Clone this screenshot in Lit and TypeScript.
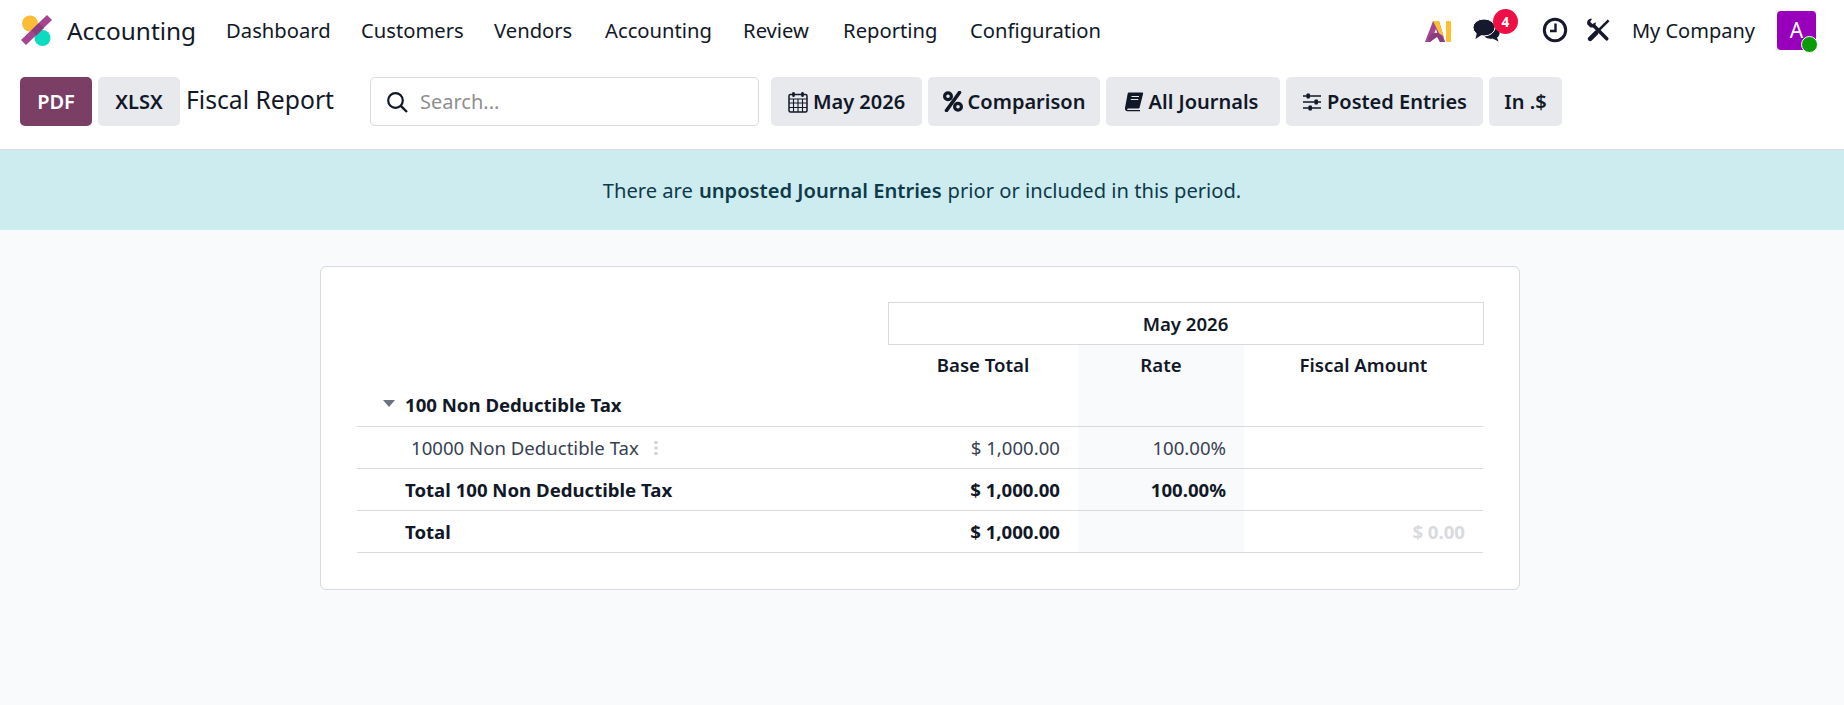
import { LitElement, html, css, svg } from "lit";
import { customElement } from "lit/decorators.js";

const menus = ["Dashboard", "Customers", "Vendors", "Accounting", "Review", "Reporting", "Configuration"];

const calendarIcon = html`<svg class="ico" viewBox="0 0 20 22" width="20" height="22">
  <rect x="1" y="3.5" width="18" height="17.5" rx="1.5" fill="none" stroke="currentColor" stroke-width="1.5" />
  <path d="M1 8h18M1 12h18M1 16.5h18M5.5 8v13M10 8v13M14.5 8v13" stroke="currentColor" stroke-width="1.1" fill="none" />
  <rect x="4.2" y="1" width="2.6" height="5" rx="1.3" fill="currentColor" />
  <rect x="13.2" y="1" width="2.6" height="5" rx="1.3" fill="currentColor" />
</svg>`;

const percentIcon = html`<svg class="ico" viewBox="0 0 20 21" width="20" height="21">
  <circle cx="5" cy="5.2" r="3.4" fill="none" stroke="currentColor" stroke-width="3.2" />
  <circle cx="15" cy="15.8" r="3.4" fill="none" stroke="currentColor" stroke-width="3.2" />
  <path d="M16.5 1.5 3.5 19.5" stroke="currentColor" stroke-width="3.6" stroke-linecap="round" />
</svg>`;

const bookIcon = html`<svg class="ico book" viewBox="0 0 20 20" width="20" height="21">
  <path d="M5 1h13.2c.7 0 1.1.6.9 1.3L15.6 16c-.2.7-.8 1-1.4 1H4.2c-1 0-1.4.8-.9 1.3.2.2.6.3 1 .3H16v1.2H3.6C1.8 19.8.6 18.4 1 16.6L3.6 2.4C3.8 1.6 4.3 1 5 1z" fill="currentColor" />
  <path d="M7.5 5h7.5M6.8 8h7.5" stroke="#e7e9ed" stroke-width="1" />
</svg>`;

const slidersIcon = html`<svg class="ico" viewBox="0 0 20 20" width="20" height="20">
  <path d="M1 4h18M1 10h18M1 16h18" stroke="currentColor" stroke-width="1.4" />
  <rect x="4.5" y="1.5" width="3.4" height="5" rx=".8" fill="currentColor" />
  <rect x="12.5" y="7.5" width="3.4" height="5" rx=".8" fill="currentColor" />
  <rect x="6.5" y="13.5" width="3.4" height="5" rx=".8" fill="currentColor" />
</svg>`;

const aiLogo = svg`
  <path d="M0 25 8 4h6l6 21h-5l-4-13-5.5 13z" fill="#a5458f" />
  <path d="M8 4h6l4.5 15-4-2-3.5-7z" fill="#fcc02e" />
  <path d="M3 21c3-5 9-7 13-3l4 7h-5l-3-5-7 5z" fill="#8a3d7a" />
  <rect x="21" y="4" width="5" height="21" rx="1" fill="#fcc02e" />
`;

@customElement("app-root")
export class AppRoot extends LitElement {
  static styles = css`
    :host {
      display: block;
      min-height: 705px;
      background: #f9fafb;
      color: #111827;
      font-family: "Noto Sans", sans-serif;
      font-size: 18.6px;
    }
    .ico {
      flex: none;
    }
    .book {
      margin-left: -4px;
    }
    .navbar {
      height: 60px;
      background: #fff;
      display: flex;
      align-items: center;
      padding: 0 28px 0 20px;
    }
    .logo {
      width: 33px;
      height: 34px;
      margin-right: 14px;
    }
    .app-name {
      font-size: 24.4px;
      margin-right: 30px;
    }
    .menus {
      display: grid;
      grid-template-columns: 135px 133px 111px 138px 100px 127px auto;
      font-size: 20.2px;
      flex: 1;
    }
    .systray {
      display: flex;
      align-items: center;
      font-size: 20px;
    }
    .chat {
      position: relative;
      display: flex;
      margin: 0 41px 0 21px;
    }
    .badge {
      position: absolute;
      top: -9px;
      left: 20px;
      width: 25px;
      height: 25px;
      border-radius: 50%;
      background: #ee0f44;
      color: #fff;
      font-size: 13.5px;
      font-weight: 700;
      display: grid;
      place-items: center;
    }
    .tools {
      margin-left: 18.5px;
    }
    .company {
      margin: 0 22px 0 21.5px;
    }
    .avatar {
      position: relative;
      width: 39px;
      height: 39px;
      border-radius: 4px;
      background: #9900bb;
      color: #fff;
      font-size: 21px;
      display: grid;
      place-items: center;
    }
    .status {
      position: absolute;
      right: -2px;
      bottom: -3px;
      width: 15px;
      height: 15px;
      border-radius: 50%;
      background: #0a9a0a;
      border: 1.5px solid #fff;
    }
    .control {
      height: 90px;
      box-sizing: border-box;
      padding: 17px 20px 0;
      background: #fff;
      display: flex;
      align-items: flex-start;
      border-bottom: 1px solid #d8dadd;
    }
    .btn {
      height: 49px;
      box-sizing: border-box;
      border-radius: 5px;
      background: #e7e9ed;
      color: #111827;
      font-weight: 600;
      font-size: 20px;
      display: flex;
      align-items: center;
      justify-content: center;
      gap: 5px;
    }
    .btn.primary {
      background: #7b3f65;
      color: #fff;
      width: 72px;
    }
    .btn.xlsx {
      width: 82px;
      margin-left: 6px;
    }
    .report-title {
      font-size: 24.7px;
      line-height: 46px;
      margin: 0 35px 0 6px;
      width: 149px;
      white-space: nowrap;
    }
    .search {
      width: 389px;
      height: 49px;
      box-sizing: border-box;
      border: 1px solid #d8dadd;
      border-radius: 5px;
      display: flex;
      align-items: center;
      gap: 12px;
      padding-left: 15px;
      color: #8f8f8f;
      font-size: 20px;
      margin-right: 12px;
    }
    .filters {
      display: flex;
      gap: 6px;
    }
    .w-date {
      width: 151px;
    }
    .w-comparison {
      width: 172px;
    }
    .w-journals {
      width: 174px;
    }
    .w-entries {
      width: 197px;
    }
    .w-unit {
      width: 73px;
    }
    .banner {
      height: 80px;
      background: #cdecf0;
      color: #0e3a4a;
      display: flex;
      align-items: center;
      justify-content: center;
      gap: 0.3em;
      font-size: 20.15px;
    }
    .banner b {
      font-weight: 600;
    }
    .page {
      padding: 36px 0 0 320px;
    }
    .card {
      width: 1200px;
      box-sizing: border-box;
      height: 324px;
      background: #fff;
      border: 1px solid #d8dadd;
      border-radius: 6px;
      padding: 35px 36px 0;
    }
    table {
      border-collapse: collapse;
      table-layout: fixed;
      width: 1126px;
    }
    .c-label {
      width: 531px;
    }
    .c-base {
      width: 190px;
    }
    .c-rate {
      width: 166px;
    }
    .c-fiscal {
      width: 239px;
    }
    td,
    th {
      padding: 0;
      font-weight: 400;
      box-sizing: border-box;
    }
    .period {
      height: 42px;
      font-weight: 600;
      text-align: center;
      border: 1px solid #d8dadd;
    }
    .heads th {
      height: 39.5px;
      font-weight: 600;
      text-align: center;
    }
    .row td {
      border-bottom: 1px solid #d8dadd;
      height: 42px;
    }
    .bold td {
      font-weight: 700;
    }
    .row .num {
      text-align: right;
      padding-right: 18px;
    }
    .shade {
      background: #f9fafb;
    }
    .label {
      padding-left: 48px;
      position: relative;
    }
    .line {
      color: #374151;
    }
    .line .label {
      padding-left: 54px;
    }
    .caret {
      position: absolute;
      left: 26px;
      top: 16px;
      width: 0;
      height: 0;
      border-left: 6px solid transparent;
      border-right: 6px solid transparent;
      border-top: 7px solid #6b7280;
    }
    .dots {
      display: inline-block;
      vertical-align: middle;
      margin-left: 10px;
      margin-top: -3px;
    }
    .zero {
      color: #d8dadd;
    }
  `;

  render() {
    return html`
      <div class="navbar">
        <svg class="logo" viewBox="0 0 33 34">
          <circle cx="10" cy="10.5" r="8" fill="#fbbd35" />
          <circle cx="22.5" cy="25" r="8" fill="#0bdcc0" />
          <path d="M27 2 32 7 6 32 1 27z" fill="#a5458f" />
          <path d="M19 10l5 5-7.5 7.5-5-5z" fill="#8a3d7a" />
        </svg>
        <span class="app-name">Accounting</span>
        <div class="menus">${menus.map((m) => html`<span>${m}</span>`)}</div>
        <div class="systray">
          <svg viewBox="0 0 27 26" width="27" height="26">${aiLogo}</svg>
          <span class="chat">
            <svg viewBox="0 0 28 24" width="28" height="24">
              <path d="M24 10c3.5 3 3.5 7.5 0 9.5l1.5 4-6-3c-3 .5-6 0-8-2z" fill="#16182d" />
              <ellipse cx="11" cy="9.5" rx="11" ry="8.5" fill="#16182d" stroke="#fff" stroke-width="1" />
              <path d="M4 14 2.5 21 10 16z" fill="#16182d" />
            </svg>
            <span class="badge">4</span>
          </span>
          <svg viewBox="0 0 26 26" width="26" height="26">
            <circle cx="13" cy="13" r="10.7" fill="none" stroke="#16182d" stroke-width="3" />
            <path d="M13.5 6.5v7.5H8" fill="none" stroke="#16182d" stroke-width="2.4" />
          </svg>
          <svg class="tools" viewBox="0 0 26 26" width="24" height="24">
            <path d="M9 9 22.5 22.5" stroke="#16182d" stroke-width="3.8" stroke-linecap="round" />
            <path d="M1.5 7C.5 3.5 2.5.5 6.5 1L4.5 4 7 6.5 10.5 4.5C11 8.5 8 11 4.5 10z" fill="#16182d" />
            <path d="M24.5 2.5 13 14" stroke="#16182d" stroke-width="2.8" />
            <path d="M11 16 4.5 22.5" stroke="#16182d" stroke-width="5" stroke-linecap="round" />
          </svg>
          <span class="company">My Company</span>
          <span class="avatar">A<span class="status"></span></span>
        </div>
      </div>

      <div class="control">
        <div class="btn primary">PDF</div>
        <div class="btn xlsx">XLSX</div>
        <div class="report-title">Fiscal Report</div>
        <div class="search">
          <svg viewBox="0 0 22 22" width="22" height="22">
            <circle cx="9.5" cy="9.5" r="7.3" fill="none" stroke="#111827" stroke-width="2.2" />
            <path d="M14.8 14.8 21 21" stroke="#111827" stroke-width="2.4" />
          </svg>
          Search...
        </div>
        <div class="filters">
          <div class="btn w-date">${calendarIcon}May 2026</div>
          <div class="btn w-comparison">${percentIcon}Comparison</div>
          <div class="btn w-journals">${bookIcon}All Journals</div>
          <div class="btn w-entries">${slidersIcon}Posted Entries</div>
          <div class="btn w-unit">In .$</div>
        </div>
      </div>

      <div class="banner">
        There are <b>unposted Journal Entries</b> prior or included in this period.
      </div>

      <div class="page">
        <div class="card">
          <table>
            <colgroup>
              <col class="c-label" />
              <col class="c-base" />
              <col class="c-rate" />
              <col class="c-fiscal" />
            </colgroup>
            <tr>
              <th></th>
              <th class="period" colspan="3">May 2026</th>
            </tr>
            <tr class="heads">
              <th></th>
              <th>Base Total</th>
              <th class="shade">Rate</th>
              <th>Fiscal Amount</th>
            </tr>
            <tr class="row bold">
              <td class="label"><span class="caret"></span>100 Non Deductible Tax</td>
              <td></td>
              <td class="shade"></td>
              <td></td>
            </tr>
            <tr class="row line">
              <td class="label">
                10000 Non Deductible Tax
                <svg class="dots" viewBox="0 0 4 16" width="4" height="16">
                  <circle cx="2" cy="2.5" r="1.8" fill="#cfd3d8" />
                  <circle cx="2" cy="8" r="1.8" fill="#cfd3d8" />
                  <circle cx="2" cy="13.5" r="1.8" fill="#cfd3d8" />
                </svg>
              </td>
              <td class="num">$ 1,000.00</td>
              <td class="num shade">100.00%</td>
              <td></td>
            </tr>
            <tr class="row bold">
              <td class="label">Total 100 Non Deductible Tax</td>
              <td class="num">$ 1,000.00</td>
              <td class="num shade">100.00%</td>
              <td></td>
            </tr>
            <tr class="row bold">
              <td class="label">Total</td>
              <td class="num">$ 1,000.00</td>
              <td class="shade"></td>
              <td class="num zero">$ 0.00</td>
            </tr>
          </table>
        </div>
      </div>
    `;
  }
}
